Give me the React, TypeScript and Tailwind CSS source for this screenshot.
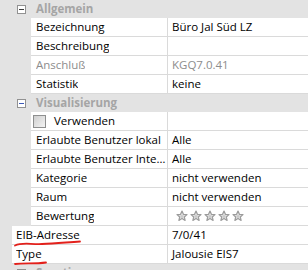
import React from "react";

const font = { fontFamily: '"Open Sans", "Noto Sans", sans-serif' };

const Minus = ({ active }: { active?: boolean }) => (
  <span className="ml-[17px] flex h-[9px] w-[9px] items-center justify-center border border-[#919191] bg-white">
    <span className={`h-px w-[5px] ${active ? "bg-[#3d5ab8]" : "bg-[#3c3c3c]"}`} />
  </span>
);

const Header = ({ title, active }: { title: string; active?: boolean }) => (
  <div className="flex h-[18px] items-center bg-[#e3e3e3]">
    <Minus active={active} />
    <span className="ml-[10px] text-[11.5px] font-bold leading-[16px] text-[#a5a5a5]">{title}</span>
  </div>
);

const Row = ({
  label,
  value,
  muted,
  top,
  children,
}: {
  label?: string;
  value?: React.ReactNode;
  muted?: boolean;
  top?: boolean;
  children?: React.ReactNode;
}) => (
  <div className="flex h-[19px] bg-[#e3e3e3]">
    <div className={top ? "w-[12px] shrink-0" : "w-[31px] shrink-0"} />
    <div className="flex flex-1 border-b border-[#dadada] bg-white">
      <div
        className={`flex h-full shrink-0 items-center overflow-hidden whitespace-nowrap border-r border-[#dadada] ${
          top ? "w-[156px] pl-[4px]" : "w-[137px] pl-[5px]"
        } ${muted ? "text-[#8d8d8d]" : "text-black"}`}
      >
        {children ?? <span className="truncate">{label}</span>}
      </div>
      <div
        className={`flex flex-1 items-center overflow-hidden whitespace-nowrap pl-[4px] ${
          muted ? "text-[#8d8d8d]" : "text-black"
        }`}
      >
        {value}
      </div>
    </div>
  </div>
);

const Star = () => (
  <svg width="12" height="12" viewBox="0 0 24 24">
    <path
      d="M12 2l2.9 6.6 7.1.6-5.4 4.7 1.6 7-6.2-3.7-6.2 3.7 1.6-7L2 9.2l7.1-.6z"
      fill="#e6e6e6"
      stroke="#9b9b9b"
      strokeWidth="2.4"
      strokeLinejoin="round"
    />
    <path d="M12 8l1.3 3 3.2.3-2.4 2.1.7 3.1-2.8-1.7-2.8 1.7.7-3.1-2.4-2.1 3.2-.3z" fill="#c9c9c9" />
  </svg>
);

export default function App() {
  return (
    <div className="relative h-[270px] w-[308px] overflow-hidden bg-[#e3e3e3] text-[11.5px] leading-[16px]" style={font}>
      <Header title="Allgemein" />
      <Row label="Bezeichnung" value="Büro Jal Süd LZ" />
      <Row label="Beschreibung" value="" />
      <Row label="Anschluß" value="KGQ7.0.41" muted />
      <Row label="Statistik" value="keine" />
      <Header title="Visualisierung" active />
      <Row value="">
        <span className="ml-[-3px] h-[13px] w-[13px] shrink-0 border border-[#8e8f8f] bg-gradient-to-br from-[#cfcfcf] to-[#f4f4f4]" />
        <span className="ml-[8px]">Verwenden</span>
      </Row>
      <Row label="Erlaubte Benutzer lokal" value="Alle" />
      <Row label="Erlaubte Benutzer Internet" value="Alle" />
      <Row label="Kategorie" value="nicht verwenden" />
      <Row label="Raum" value="nicht verwenden" />
      <Row
        label="Bewertung"
        value={
          <span className="ml-[4px] flex gap-[2px]">
            <Star />
            <Star />
            <Star />
            <Star />
            <Star />
          </span>
        }
      />
      <Row top label="EIB-Adresse" value="7/0/41" />
      <Row top label="Type" value="Jalousie EIS7" />
      <Header title="Sonstiges" />

      <svg className="pointer-events-none absolute left-0 top-0" width="308" height="270">
        <path
          d="M15 245.5 C 22 242, 30 244.5, 42 244 S 65 242.5, 80 241.5"
          fill="none"
          stroke="#e3201b"
          strokeWidth="1.8"
          strokeLinecap="round"
        />
        <path
          d="M15 264 C 25 263, 35 264, 46 262.5"
          fill="none"
          stroke="#e3201b"
          strokeWidth="1.8"
          strokeLinecap="round"
        />
      </svg>
    </div>
  );
}
